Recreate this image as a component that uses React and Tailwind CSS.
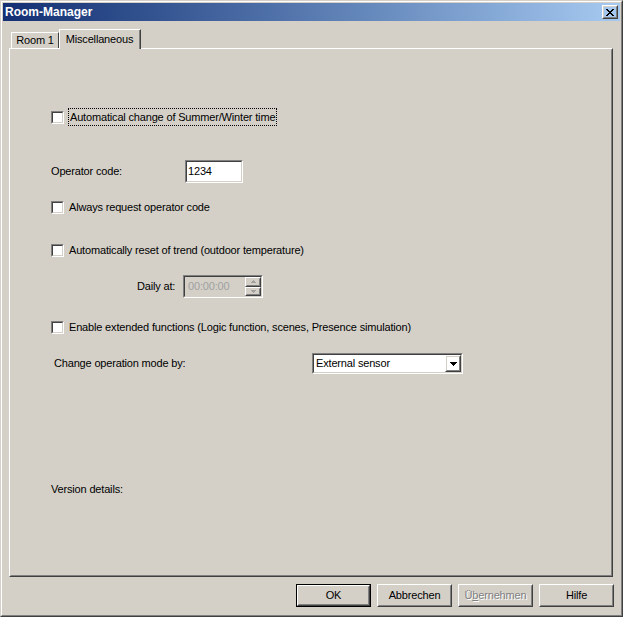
import React from 'react';

// classic 3D frames
const Raised = ({ className = '', children }) => (
  <div className={`border border-t-white border-l-white border-r-[#404040] border-b-[#404040] ${className}`}>
    <div className="w-full h-full border border-t-[#d4d0c8] border-l-[#d4d0c8] border-r-[#808080] border-b-[#808080] flex items-center justify-center">
      {children}
    </div>
  </div>
);

const Sunken = ({ className = '', inner = 'bg-white', children }) => (
  <div className={`border border-t-[#808080] border-l-[#808080] border-r-white border-b-white ${className}`}>
    <div className={`w-full h-full border border-t-[#404040] border-l-[#404040] border-r-[#d4d0c8] border-b-[#d4d0c8] flex items-center ${inner}`}>
      {children}
    </div>
  </div>
);

const Check = () => <Sunken className="w-[13px] h-[13px] shrink-0" />;

const CheckRow = ({ mt, label }) => (
  <div className={`flex items-center h-[17px] ${mt}`}>
    <Check />
    <span className="ml-[5px] whitespace-nowrap">{label}</span>
  </div>
);

const DlgButton = ({ children, isDefault, disabled }) => {
  const body = (
    <Raised className={isDefault ? 'w-[73px] h-[21px]' : 'w-[75px] h-[23px]'}>
      {disabled ? (
        <span className="text-[#808080] [text-shadow:1px_1px_0_#ffffff]">{children}</span>
      ) : (
        <span>{children}</span>
      )}
    </Raised>
  );
  return isDefault ? <div className="border border-black">{body}</div> : body;
};

const Arrow = ({ up, color = '#000000', w = 7, h = 4 }) => (
  <svg width={w} height={h} viewBox={`0 0 ${w} ${h}`}>
    <path
      d={up ? `M0 ${h} L${w / 2} 0 L${w} ${h} Z` : `M0 0 L${w} 0 L${w / 2} ${h} Z`}
      fill={color}
      shapeRendering="crispEdges"
    />
  </svg>
);

export default function App() {
  return (
    <div className="w-[623px] h-[617px] bg-[#d4d0c8] border border-t-[#d4d0c8] border-l-[#d4d0c8] border-r-[#404040] border-b-[#404040] font-['Liberation_Sans',Arial,sans-serif] text-[11px] tracking-[-0.17px] text-black leading-none">
      <div className="h-full border border-t-white border-l-white border-r-[#808080] border-b-[#808080] p-px flex flex-col">
        {/* title bar */}
        <div className="h-[18px] shrink-0 flex items-center bg-linear-to-r from-[#142f72] to-[#a6caf0] pl-[2px] pr-[2px]">
          <span className="flex-1 text-white font-bold text-[12px] tracking-normal">Room-Manager</span>
          <Raised className="w-[16px] h-[14px]">
            <svg width="8" height="7" viewBox="0 0 8 7" shapeRendering="crispEdges">
              <path d="M0 0h2v1h-2z M6 0h2v1h-2z M1 1h2v1h-2z M5 1h2v1h-2z M2 2h4v1h-4z M3 3h2v1h-2z M2 4h4v1h-4z M1 5h2v1h-2z M5 5h2v1h-2z M0 6h2v1h-2z M6 6h2v1h-2z" fill="#000" />
            </svg>
          </Raised>
        </div>

        {/* tabs */}
        <div className="mt-[8px] h-[19px] shrink-0 flex items-end pl-[8px]">
          <div className="w-[48px] h-[16px] border-l border-t border-l-white border-t-white border-r border-r-[#404040] flex items-center justify-center">
            Room 1
          </div>
          <div className="relative z-10 -mb-px w-[82px] h-[20px] bg-[#d4d0c8] border-l border-t border-l-white border-t-white border-r border-r-[#404040]">
            <div className="h-full border-r border-r-[#808080] flex items-center justify-center pb-px">
              Miscellaneous
            </div>
          </div>
        </div>

        {/* tab panel */}
        <div className="ml-[6px] w-[604px] h-[529px] shrink-0 border border-t-white border-l-white border-r-[#404040] border-b-[#404040]">
          <div className="h-full border border-t-[#d4d0c8] border-l-[#d4d0c8] border-r-[#808080] border-b-[#808080] pl-[40px] flex flex-col">
            <div className="mt-[58px] h-[18px] flex items-center">
              <Check />
              <span className="ml-[4px] h-[18px] px-px flex items-center border border-dotted border-black whitespace-nowrap">
                Automatical change of Summer/Winter time
              </span>
            </div>

            <div className="mt-[34px] h-[23px] flex items-center">
              <span className="w-[134px]">Operator code:</span>
              <Sunken className="w-[58px] h-[23px]">
                <span className="pl-[1px]">1234</span>
              </Sunken>
            </div>

            <CheckRow mt="mt-[16px]" label="Always request operator code" />
            <CheckRow mt="mt-[26px]" label="Automatically reset of trend (outdoor temperature)" />

            <div className="mt-[16px] h-[23px] flex items-center ml-[86px]">
              <span className="w-[46px]">Daily at:</span>
              <Sunken className="w-[80px] h-[23px]" inner="bg-[#d4d0c8]">
                <span className="flex-1 pl-[3px] text-[#a0a0a0]">00:00:00</span>
                <div className="w-[16px] h-full flex flex-col">
                  <Raised className="flex-1">
                    <Arrow up color="#a0a0a0" w={5} h={3} />
                  </Raised>
                  <Raised className="flex-1">
                    <Arrow color="#a0a0a0" w={5} h={3} />
                  </Raised>
                </div>
              </Sunken>
            </div>

            <CheckRow mt="mt-[21px]" label="Enable extended functions (Logic function, scenes, Presence simulation)" />

            <div className="mt-[17px] h-[21px] flex items-center ml-[3px]">
              <span className="w-[258px]">Change operation mode by:</span>
              <Sunken className="w-[151px] h-[21px]">
                <span className="flex-1 pl-[2px]">External sensor</span>
                <Raised className="w-[16px] h-full">
                  <Arrow />
                </Raised>
              </Sunken>
            </div>

            <div className="mt-[107px] h-[17px] flex items-center">Version details:</div>
          </div>
        </div>

        {/* dialog buttons */}
        <div className="mt-[7px] h-[23px] shrink-0 flex justify-end gap-[6px] pr-[6px]">
          <DlgButton isDefault>OK</DlgButton>
          <DlgButton>Abbrechen</DlgButton>
          <DlgButton disabled>
            Ü<span className="underline">b</span>ernehmen
          </DlgButton>
          <DlgButton>Hilfe</DlgButton>
        </div>
      </div>
    </div>
  );
}
